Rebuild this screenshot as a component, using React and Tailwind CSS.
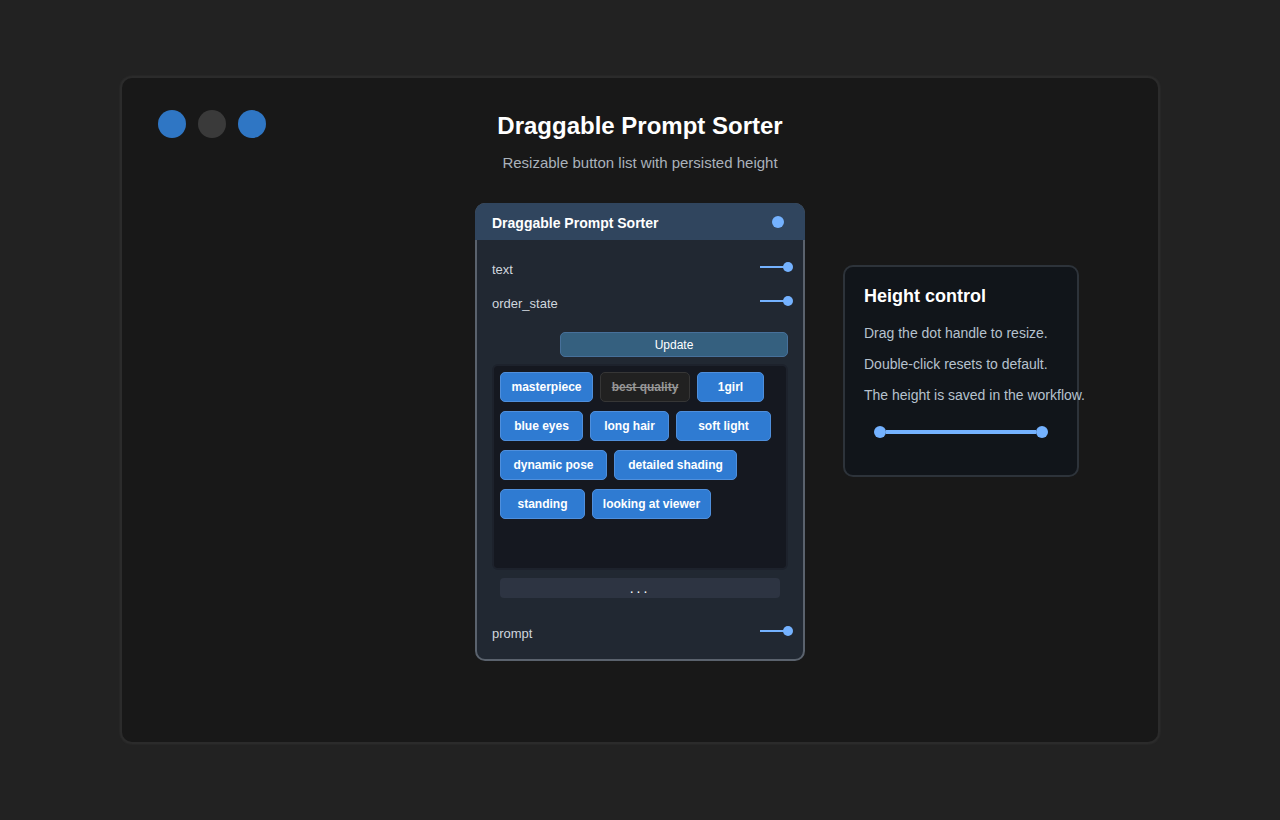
import React from 'react';

const rows = [
  [
    { label: 'masterpiece', w: 'w-[93px]' },
    { label: 'best quality', w: 'w-[90px]', off: true },
    { label: '1girl', w: 'w-[67px]' },
  ],
  [
    { label: 'blue eyes', w: 'w-[83px]' },
    { label: 'long hair', w: 'w-[79px]' },
    { label: 'soft light', w: 'w-[95px]' },
  ],
  [
    { label: 'dynamic pose', w: 'w-[107px]' },
    { label: 'detailed shading', w: 'w-[123px]' },
  ],
  [
    { label: 'standing', w: 'w-[85px]' },
    { label: 'looking at viewer', w: 'w-[119px]' },
  ],
];

const Port = ({ label, className }) => (
  <div className={`flex items-start justify-between pl-[15px] pr-[10px] ${className}`}>
    <span className="text-[13px] leading-[16px] text-[#cfd6de] mt-[-1px]">{label}</span>
    <span className="flex items-center h-[10px] mt-[-1px]">
      <span className="w-[24px] h-[2px] bg-[#74b2ff]" />
      <span className="w-[10px] h-[10px] rounded-full bg-[#74b2ff] ml-[-1px]" />
    </span>
  </div>
);

const Chip = ({ label, w, off }) => (
  <button
    className={`${w} h-[30px] rounded-[5px] border text-[12px] font-bold ${
      off
        ? 'bg-[#212121] border-[#363636] text-[#969696] line-through'
        : 'bg-[#2f7bd2] border-[#4f8fdc] text-white'
    }`}
  >
    {label}
  </button>
);

export default function App() {
  return (
    <div className="h-[820px] bg-[#222222] px-[120px] pt-[76px] font-['Liberation_Sans',Arial,sans-serif]">
      <div className="relative h-[668px] rounded-[12px] border-2 border-[#2b2b2b] bg-[#181818] pt-[32px] shadow-[0_0_0_1px_#262626]">
        <div className="absolute left-[36px] top-[32px] flex gap-[12px]">
          <span className="w-[28px] h-[28px] rounded-full bg-[#2f76c4]" />
          <span className="w-[28px] h-[28px] rounded-full bg-[#3a3a3a]" />
          <span className="w-[28px] h-[28px] rounded-full bg-[#2f76c4]" />
        </div>

        <h1 className="text-center text-[24px] leading-[32px] font-bold text-white">Draggable Prompt Sorter</h1>
        <p className="mt-[12px] text-center text-[15px] leading-[18px] text-[#aab2bb]">
          Resizable button list with persisted height
        </p>

        <div className="mt-[31px] grid grid-cols-[1fr_330px_1fr]">
          <div className="col-start-2 h-[458px] rounded-[10px] border-2 border-[#5a626d] bg-[#212832]">
            <div className="mx-[-2px] mt-[-2px] flex h-[37px] items-center justify-between rounded-t-[10px] bg-[#30455e] pl-[17px] pr-[21px]">
              <span className="mt-[4px] text-[14px] font-bold text-white">Draggable Prompt Sorter</span>
              <span className="w-[12px] h-[12px] rounded-full bg-[#74b2ff]" />
            </div>

            <Port label="text" className="mt-[23px]" />
            <Port label="order_state" className="mt-[19px]" />

            <div className="ml-[83px] mr-[15px] mt-[20px] flex h-[25px] items-center justify-center rounded-[5px] border border-[#47709a] bg-[#35607f] text-[12px] text-white">
              Update
            </div>

            <div className="mx-[15px] mt-[7px] flex h-[206px] flex-col gap-[9px] rounded-[6px] border-2 border-[#1d222c] bg-[#151820] p-[6px]">
              {rows.map((row, i) => (
                <div key={i} className="flex gap-[7px]">
                  {row.map((c) => (
                    <Chip key={c.label} {...c} />
                  ))}
                </div>
              ))}
            </div>

            <div className="mx-[23px] mt-[8px] flex h-[20px] items-center justify-center rounded-[4px] bg-[#2d3442] text-[14px] leading-none tracking-[3px] text-white">
              ...
            </div>

            <Port label="prompt" className="mt-[29px]" />
          </div>

          <div className="ml-[38px] mt-[62px] h-[212px] w-[236px] rounded-[10px] border-2 border-[#2d333a] bg-[#11151a] pl-[19px] pt-[17px]">
            <h2 className="text-[18px] leading-[24px] font-bold text-white">Height control</h2>
            <p className="mt-[17px] whitespace-nowrap text-[14px] leading-[16px] text-[#b6c2ce]">Drag the dot handle to resize.</p>
            <p className="mt-[15px] whitespace-nowrap text-[14px] leading-[16px] text-[#b6c2ce]">Double-click resets to default.</p>
            <p className="mt-[15px] whitespace-nowrap text-[14px] leading-[16px] text-[#b6c2ce]">The height is saved in the workflow.</p>
            <div className="ml-[10px] mt-[23px] flex w-[174px] items-center">
              <span className="w-[12px] h-[12px] rounded-full bg-[#74b2ff]" />
              <span className="flex-1 h-[4px] bg-[#74b2ff]" />
              <span className="w-[12px] h-[12px] rounded-full bg-[#74b2ff]" />
            </div>
          </div>
        </div>
      </div>
    </div>
  );
}
